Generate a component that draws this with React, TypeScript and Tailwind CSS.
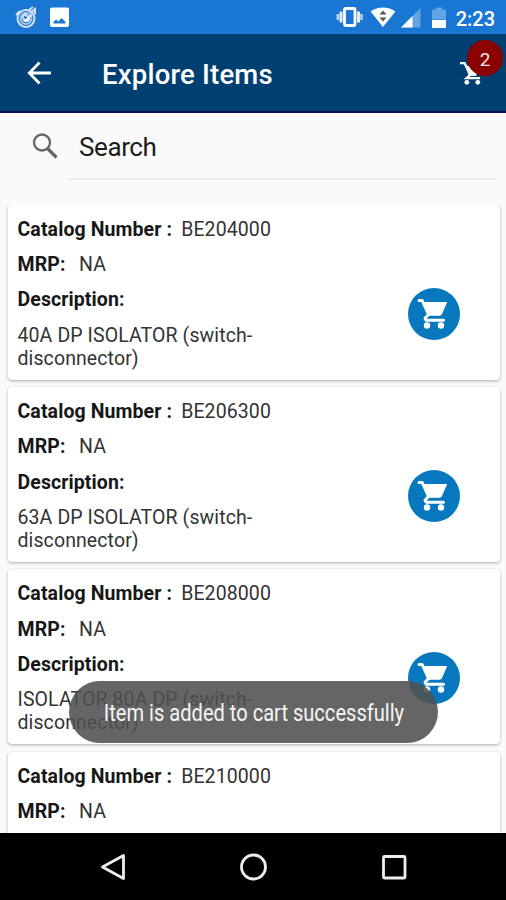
const items = [
  { catalog: 'BE204000', mrp: 'NA', description: ['40A DP ISOLATOR (switch-', 'disconnector)'] },
  { catalog: 'BE206300', mrp: 'NA', description: ['63A DP ISOLATOR (switch-', 'disconnector)'] },
  { catalog: 'BE208000', mrp: 'NA', description: ['ISOLATOR 80A DP (switch-', 'disconnector)'] },
  { catalog: 'BE210000', mrp: 'NA', description: [] },
];

function StatusBar() {
  return (
    <div className="flex h-[34px] shrink-0 items-center bg-[#1976d2] pr-[11px] pl-[14px] text-white">
      <svg className="h-6 w-6" viewBox="0 0 24 24" fill="none" stroke="#d3e4f8">
        <circle cx="12" cy="13.500" r="8.500" strokeWidth="2" />
        <circle cx="12" cy="13.500" r="5.500" strokeWidth="2" stroke="#a9caf0" />
        <path d="M2 10l4-4M15 5l4-3M16 8l5-4v5M8 13l3-4 3 3 4-2" strokeWidth="2" />
        <path d="M8 13q4 2 8-1.500q.5 5.500-4 5.500-3 0-4-4z" fill="#fff" stroke="none" />
      </svg>
      <svg className="ml-[12px] h-5 w-5" viewBox="0 0 20 20">
        <rect x="0" y="0.500" width="19" height="19.500" rx="2" fill="#fff" />
        <path d="M3.500 16.500v-1.500l2.500-2.500 2.500 2 3-3.500 4 4v1.500z" fill="#1976d2" />
      </svg>
      <div className="ml-auto flex items-center">
        <svg className="h-[22px] w-[27px]" viewBox="0 0 27 22">
          <rect x="8.500" y="2.500" width="10.500" height="17" rx="1" fill="none" stroke="#fff" strokeWidth="2.800" />
          <path d="M5 5.500v11M22.500 5.500v11" stroke="#e3edfa" strokeWidth="3" />
          <path d="M1.800 8v6M25.500 8v6" stroke="#b8d3f3" strokeWidth="2.500" />
        </svg>
        <svg className="ml-[7px] h-[22px] w-[26px]" viewBox="0 0 26 22">
          <path d="M.6 5.500C7.500.3 18.500.3 25.400 5.500L13 21z" fill="#fff" />
          <path d="M9.500 8.500l3.500-4 3.500 4zM9.500 11.500l3.500 4 3.500-4z" fill="#555" />
        </svg>
        <svg className="ml-[4px] h-[22px] w-[21px]" viewBox="0 0 21 22">
          <path d="M20.500 2v19.500H1z" fill="#65a4e3" />
          <path d="M12.500 10v11.500H1z" fill="#fff" />
        </svg>
        <svg className="ml-[11px] h-[22px] w-[14px]" viewBox="0 0 14 22">
          <path d="M0 3.500h4v-2h6v2h4v10H0z" fill="#65a4e3" />
          <path d="M0 14h14v8H0z" fill="#fff" />
        </svg>
        <span className="ml-[10px] pt-[3px] text-[20px] leading-[24px] font-medium">2:23</span>
      </div>
    </div>
  );
}

function Header() {
  return (
    <div className="flex h-[79px] shrink-0 items-center border-b-2 border-[#090f58] bg-[#003f72] text-white">
      <svg className="ml-[27px] h-6 w-6" viewBox="0 0 24 24" fill="none" stroke="#fff" strokeWidth="2.800">
        <path d="M12.500 1.500L2.300 12l10.200 10.500M2.500 12h21.500" />
      </svg>
      <h1 className="ml-[51px] pt-[5px] text-[27.500px] leading-[32px] font-medium tracking-[0.2px]">Explore Items</h1>
      <div className="relative ml-auto h-[79px] w-[46px]">
        <svg className="mt-[29px] h-[23px] w-[22px]" viewBox="0 0 22 23" fill="none" stroke="#fff">
          <path d="M0 1.200h4.500l6 11.500-4 3.500H20" strokeWidth="2.300" />
          <path d="M5 4h15l-4 10H9z" fill="#fff" stroke="none" />
          <circle cx="6.800" cy="20.300" r="2.400" fill="#fff" stroke="none" />
          <circle cx="17.800" cy="20.300" r="2.400" fill="#fff" stroke="none" />
        </svg>
        <span className="absolute top-[7px] left-[7px] flex h-9 w-9 items-center justify-center rounded-full bg-[#8b0000] pt-[5px] text-[19px] text-[#f8e8e8]">
          2
        </span>
      </div>
    </div>
  );
}

function SearchBar() {
  return (
    <div className="flex h-[91.700px] shrink-0 pl-[32px]">
      <svg className="mt-[20px] h-[26px] w-[26px]" viewBox="0 0 26 26" fill="none" stroke="#666">
        <circle cx="10" cy="9.500" r="8" strokeWidth="2.300" />
        <path d="M15.500 15.500l9 9" strokeWidth="3.200" />
      </svg>
      <div className="mt-[16px] mr-[10px] ml-[10px] h-[51px] flex-1 border-b-2 border-[#ececec] pl-[11px] text-[26px] leading-[36px] tracking-[-0.4px] text-[#1c1c1c]">
        Search
      </div>
    </div>
  );
}

function CartButton() {
  return (
    <button className="mt-[83px] mr-[40px] h-[52px] w-[52px] shrink-0">
      <svg className="h-[52px] w-[52px]" viewBox="0 0 52 52">
        <circle cx="26" cy="26" r="26" fill="#0878be" />
        <path d="M11 12.500h3.200l6.300 14-3.500 3.700 1.200 2h17.300" fill="none" stroke="#fff" strokeWidth="3" strokeLinecap="round" strokeLinejoin="round" />
        <path d="M15.500 14.500h23l-5 11.500q-.5 1.200-1.700 1.200H21z" fill="#fff" stroke="#fff" strokeWidth="1" strokeLinejoin="round" />
        <circle cx="19" cy="37.500" r="3.200" fill="#fff" />
        <circle cx="33" cy="37.500" r="3.200" fill="#fff" />
      </svg>
    </button>
  );
}

function ItemCard({ item }: { item: (typeof items)[number] }) {
  return (
    <div className="flex h-[175px] shrink-0 justify-between rounded-[4px] bg-white shadow-[0_1px_3px_rgba(0,0,0,0.32)]">
      <div className="pt-[13px] pl-[9.500px] text-[19.500px] leading-[23px] tracking-[0.1px] whitespace-nowrap text-[#333]">
        <div className="mb-[12.300px] flex">
          <b className="w-[163.700px] font-bold text-[#171717]">Catalog Number :</b>
          <span>{item.catalog}</span>
        </div>
        <div className="mb-[12.300px] flex">
          <b className="w-[61.500px] font-bold text-[#171717]">MRP:</b>
          <span>{item.mrp}</span>
        </div>
        {item.description.length > 0 && (
          <div className="mb-[12.300px] font-bold text-[#171717]">Description:</div>
        )}
        {item.description.map((line) => (
          <div key={line}>{line}</div>
        ))}
      </div>
      <CartButton />
    </div>
  );
}

function NavBar() {
  return (
    <div className="flex h-[67px] shrink-0 items-center bg-black pl-[100px]">
      <svg className="h-[28px] w-[26px]" viewBox="0 0 26 28" fill="none" stroke="#eee" strokeWidth="2.800">
        <path d="M23.500 2.500v23L2.500 14z" strokeLinejoin="round" />
      </svg>
      <svg className="ml-[113px] h-[28px] w-[28px]" viewBox="0 0 28 28" fill="none" stroke="#eee" strokeWidth="2.800">
        <circle cx="14.500" cy="14" r="12" />
      </svg>
      <svg className="ml-[114px] h-[28px] w-[26px]" viewBox="0 0 26 28" fill="none" stroke="#eee" strokeWidth="2.800">
        <rect x="2.500" y="3.500" width="21.500" height="21.500" rx="1" />
      </svg>
    </div>
  );
}

export default function App() {
  return (
    <div className="relative flex h-[900px] w-[506px] flex-col overflow-hidden bg-[#fafafa] font-['Roboto',sans-serif]">
      <StatusBar />
      <Header />
      <SearchBar />
      <div className="flex min-h-0 flex-1 flex-col gap-[7.400px] overflow-hidden pr-[6px] pl-[8px]">
        {items.map((item) => (
          <ItemCard key={item.catalog} item={item} />
        ))}
      </div>
      <NavBar />
      <div className="absolute top-[681px] left-[69px] flex h-[62px] w-[369px] items-center justify-center rounded-full bg-[#505050]/88">
        <span className="scale-x-[0.873] pt-[4px] text-[23px] whitespace-nowrap text-[#f5f5f5]">Item is added to cart successfully</span>
      </div>
    </div>
  );
}
